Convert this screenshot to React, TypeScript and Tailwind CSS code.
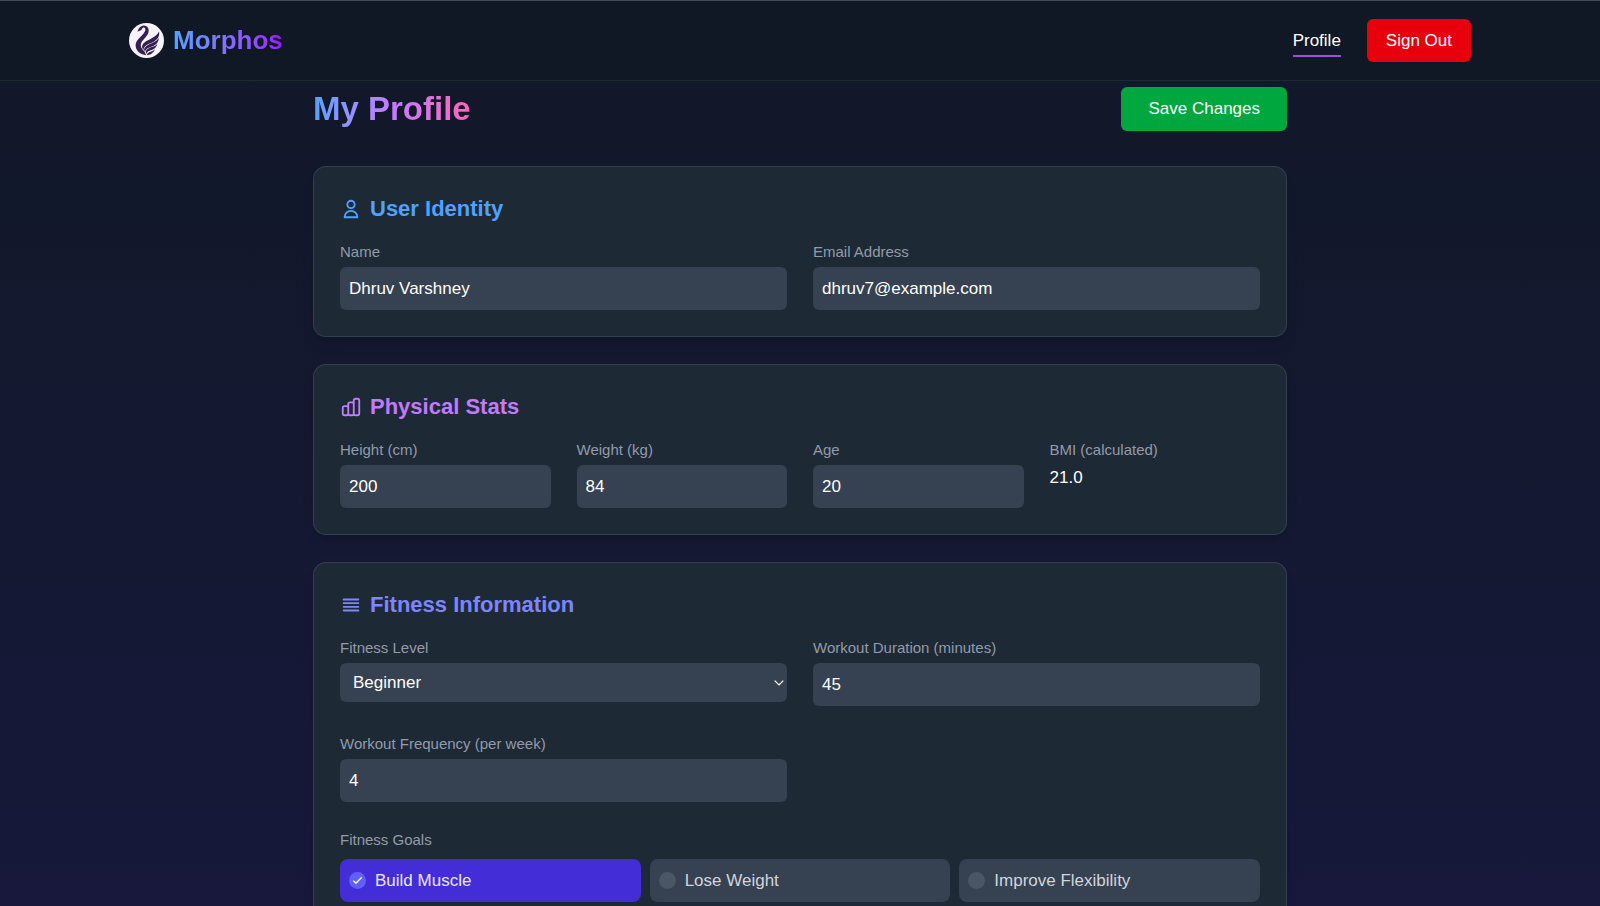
import { useState, type ReactNode } from "react";

const inputClass =
  "block h-[43px] w-full rounded-md bg-[#364151] px-[9px] text-[17px] text-white outline-none";

function Field({ id, label, children }: { id: string; label: string; children: ReactNode }) {
  return (
    <div>
      <label htmlFor={id} className="mb-1 block text-[15px] leading-[22px] text-[#939ba8]">
        {label}
      </label>
      {children}
    </div>
  );
}

function TextField({ id, label, value, type = "text" }: { id: string; label: string; value: string; type?: string }) {
  return (
    <Field id={id} label={label}>
      <input id={id} type={type} defaultValue={value} className={inputClass} />
    </Field>
  );
}

function Card({ title, color, icon, children }: { title: string; color: string; icon: string; children: ReactNode }) {
  return (
    <section className="rounded-[13px] border border-[#364153]/90 bg-[#1e2936] p-[26px] shadow-lg">
      <h2 className={`mb-[17px] flex items-center gap-2 text-[22px] leading-[31px] font-bold ${color}`}>
        <svg viewBox="0 0 24 24" className="size-[22px]" fill="none" stroke="currentColor" strokeWidth="2" strokeLinecap="round" strokeLinejoin="round" aria-hidden="true">
          <path d={icon} />
        </svg>
        {title}
      </h2>
      {children}
    </section>
  );
}

function SwanLogo() {
  return (
    <svg viewBox="0 0 100 100" className="size-[35px]" aria-hidden="true">
      <circle cx="50" cy="50" r="50" fill="#f7f3f8" />
      <g fill="#35204f">
        <path d="M24 25C26 20 28 15 33 11C40 5 51 6 55 15C60 28 50 38 41 48C32 58 31 68 40 77C46 83 48 88 49 92C34 91 20 81 19 66C18 52 29 43 38 34C44 28 49 21 46 15C43 11 39 13 37 17C35 22 31 21 24 25Z" />
        <path d="M86 24C89 42 76 52 61 58C49 63 42 68 41 77C33 67 39 58 51 51C65 43 78 38 86 24Z" />
        <path d="M85 43C85 59 72 65 61 69C51 72 46 76 46 83C39 73 47 67 58 61C69 56 79 53 85 43Z" />
        <path d="M81 60C78 73 67 77 59 79C53 81 51 84 50 88C45 79 52 74 61 70C69 67 76 66 81 60Z" />
        <path d="M74 76C68 88 59 92 51 92C52 83 66 83 74 76Z" />
      </g>
    </svg>
  );
}

const goals = ["Build Muscle", "Lose Weight", "Improve Flexibility"];

export default function App() {
  const [selected, setSelected] = useState<string[]>(["Build Muscle"]);
  const toggle = (goal: string) =>
    setSelected((s) => (s.includes(goal) ? s.filter((g) => g !== goal) : [...s, goal]));

  return (
    <div className="h-screen overflow-y-auto bg-linear-to-b from-[#111827] to-[#17183b] font-['Liberation_Sans',Arial,sans-serif] text-[17px] leading-[26px] text-white [scrollbar-width:none]">
      <header className="sticky top-0 z-10 border-t border-b border-t-[#454b54] border-b-[#1e2936] bg-[#101725]">
        <div className="mx-auto flex h-[79px] max-w-[1394px] items-center justify-between px-[26px]">
          <a href="#home" className="flex items-center gap-[9px]">
            <SwanLogo />
            <span className="bg-linear-to-r from-[#51a2ff] to-[#9810fa] bg-clip-text text-[26px] leading-[35px] font-bold text-transparent">
              Morphos
            </span>
          </a>
          <nav className="flex items-center gap-[26px]">
            <a href="#profile" className="border-b-2 border-[#9a4fd8] pt-[3px] pb-px text-white">
              Profile
            </a>
            <button type="button" className="h-[43px] rounded-md bg-[#e7000b] px-[19px]">
              Sign Out
            </button>
          </nav>
        </div>
      </header>

      <main className="mx-auto max-w-[1026px] px-[26px] pt-[6px] pb-[26px]">
        <div className="mb-[35px] flex items-center justify-between">
          <h1 className="bg-linear-to-r from-[#51a2ff] via-[#c27aff] to-[#fb64b6] bg-clip-text text-[33px] leading-[40px] font-bold text-transparent">
            My Profile
          </h1>
          <button type="button" className="h-11 rounded-md bg-[#00a63e] px-[27px]">
            Save Changes
          </button>
        </div>

        <div className="flex flex-col gap-[27px]">
          <Card
            title="User Identity"
            color="text-[#51a2ff]"
            icon="M16 7a4 4 0 11-8 0 4 4 0 018 0zM12 14a7 7 0 00-7 7h14a7 7 0 00-7-7z"
          >
            <div className="grid grid-cols-1 gap-x-[26px] gap-y-[27px] md:grid-cols-2">
              <TextField id="name" label="Name" value="Dhruv Varshney" />
              <TextField id="email" label="Email Address" type="email" value="dhruv7@example.com" />
            </div>
          </Card>

          <Card
            title="Physical Stats"
            color="text-[#c27aff]"
            icon="M9 19v-6a2 2 0 00-2-2H5a2 2 0 00-2 2v6a2 2 0 002 2h2a2 2 0 002-2zm0 0V9a2 2 0 012-2h2a2 2 0 012 2v10m-6 0a2 2 0 002 2h2a2 2 0 002-2m0 0V5a2 2 0 012-2h2a2 2 0 012 2v14a2 2 0 01-2 2h-2a2 2 0 01-2-2z"
          >
            <div className="grid grid-cols-2 gap-x-[26px] gap-y-[27px] md:grid-cols-4">
              <TextField id="height" label="Height (cm)" value="200" />
              <TextField id="weight" label="Weight (kg)" value="84" />
              <TextField id="age" label="Age" value="20" />
              <Field id="bmi" label="BMI (calculated)">
                <output id="bmi" className="block">21.0</output>
              </Field>
            </div>
          </Card>

          <Card title="Fitness Information" color="text-[#7c86ff]" icon="M4 6h16M4 10h16M4 14h16M4 18h16">
            <div className="grid grid-cols-1 gap-x-[26px] gap-y-[27px] md:grid-cols-2">
              <Field id="level" label="Fitness Level">
                <div className="relative">
                  <select
                    id="level"
                    defaultValue="Beginner"
                    className="block h-[39px] w-full appearance-none rounded-md bg-[#364151] px-[13px] text-[17px] text-white outline-none"
                  >
                    <option>Beginner</option>
                    <option>Intermediate</option>
                    <option>Advanced</option>
                  </select>
                  <svg viewBox="0 0 10 6" className="pointer-events-none absolute top-[17px] right-[3px] h-[6px] w-[10px]" fill="none" stroke="#fff" strokeWidth="1.2" aria-hidden="true">
                    <path d="M0.7 0.7L5 5L9.3 0.7" />
                  </svg>
                </div>
              </Field>
              <TextField id="duration" label="Workout Duration (minutes)" value="45" />
              <TextField id="frequency" label="Workout Frequency (per week)" value="4" />
            </div>

            <fieldset className="mt-[27px]">
              <legend className="mb-2 text-[15px] leading-[22px] text-[#939ba8]">Fitness Goals</legend>
              <div className="grid grid-cols-1 gap-[9px] md:grid-cols-3">
                {goals.map((goal) => {
                  const on = selected.includes(goal);
                  return (
                    <label
                      key={goal}
                      className={`flex h-[43px] cursor-pointer items-center gap-[9px] rounded-lg px-[9px] ${on ? "bg-[#432dd7] text-[#e8e9fb]" : "bg-[#364151] text-[#d1d5dc]"}`}
                    >
                      <input type="checkbox" className="sr-only" checked={on} onChange={() => toggle(goal)} />
                      <span className={`flex size-[17px] items-center justify-center rounded-full ${on ? "bg-[#615fff]" : "bg-[#4a5565]"}`}>
                        {on && (
                          <svg viewBox="0 0 24 24" className="size-[13px]" fill="none" stroke="#fff" strokeWidth="2.4" strokeLinecap="round" strokeLinejoin="round" aria-hidden="true">
                            <path d="M5 13l4 4L19 7" />
                          </svg>
                        )}
                      </span>
                      {goal}
                    </label>
                  );
                })}
              </div>
            </fieldset>
          </Card>
        </div>
      </main>
    </div>
  );
}
